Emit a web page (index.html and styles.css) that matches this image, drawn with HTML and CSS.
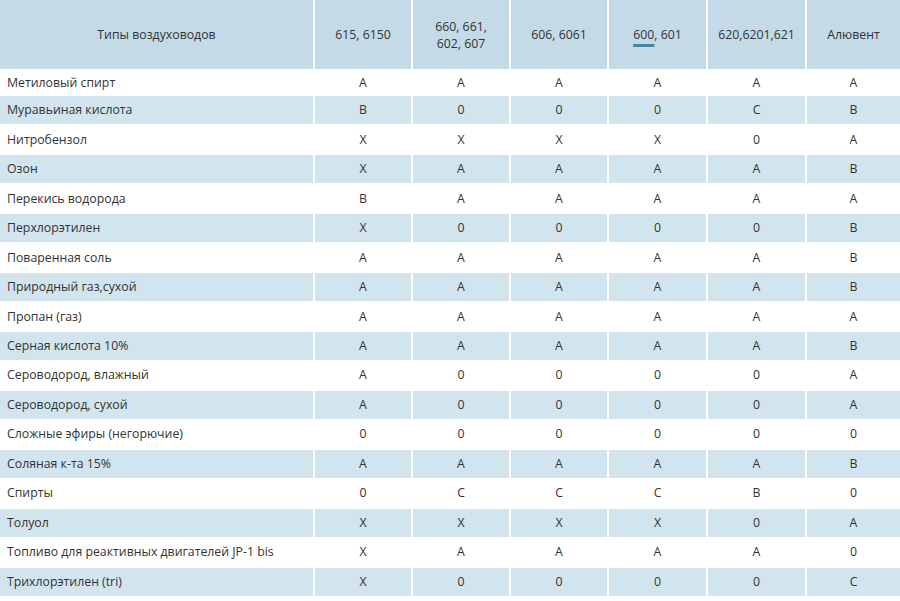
FILE: index.html
```html
<!DOCTYPE html>
<html lang="ru">
<head>
<meta charset="utf-8">
<title>Типы воздуховодов</title>
<link rel="stylesheet" href="styles.css">
</head>
<body>
<table class="chem">
<colgroup>
<col class="c-name"><col class="c-a"><col class="c-b"><col class="c-c"><col class="c-d"><col class="c-e"><col class="c-f">
</colgroup>
<thead>
<tr>
<th>Типы воздуховодов</th>
<th>615, 6150</th>
<th>660, 661,<br>602, 607</th>
<th>606, 6061</th>
<th><span class="mark">600</span>, 601</th>
<th>620,6201,621</th>
<th>Алювент</th>
</tr>
</thead>
<tbody>
<tr class="first"><td>Метиловый спирт</td><td>A</td><td>A</td><td>A</td><td>A</td><td>A</td><td>A</td></tr>
<tr><td>Муравьиная кислота</td><td>B</td><td>0</td><td>0</td><td>0</td><td>C</td><td>B</td></tr>
<tr><td>Нитробензол</td><td>X</td><td>X</td><td>X</td><td>X</td><td>0</td><td>A</td></tr>
<tr><td>Озон</td><td>X</td><td>A</td><td>A</td><td>A</td><td>A</td><td>B</td></tr>
<tr><td>Перекись водорода</td><td>B</td><td>A</td><td>A</td><td>A</td><td>A</td><td>A</td></tr>
<tr><td>Перхлорэтилен</td><td>X</td><td>0</td><td>0</td><td>0</td><td>0</td><td>B</td></tr>
<tr><td>Поваренная соль</td><td>A</td><td>A</td><td>A</td><td>A</td><td>A</td><td>B</td></tr>
<tr><td>Природный газ,сухой</td><td>A</td><td>A</td><td>A</td><td>A</td><td>A</td><td>B</td></tr>
<tr><td>Пропан (газ)</td><td>A</td><td>A</td><td>A</td><td>A</td><td>A</td><td>A</td></tr>
<tr><td>Серная кислота 10%</td><td>A</td><td>A</td><td>A</td><td>A</td><td>A</td><td>B</td></tr>
<tr><td>Сероводород, влажный</td><td>A</td><td>0</td><td>0</td><td>0</td><td>0</td><td>A</td></tr>
<tr><td>Сероводород, сухой</td><td>A</td><td>0</td><td>0</td><td>0</td><td>0</td><td>A</td></tr>
<tr><td>Сложные эфиры (негорючие)</td><td>0</td><td>0</td><td>0</td><td>0</td><td>0</td><td>0</td></tr>
<tr><td>Соляная к-та 15%</td><td>A</td><td>A</td><td>A</td><td>A</td><td>A</td><td>B</td></tr>
<tr><td>Спирты</td><td>0</td><td>C</td><td>C</td><td>C</td><td>B</td><td>0</td></tr>
<tr><td>Толуол</td><td>X</td><td>X</td><td>X</td><td>X</td><td>0</td><td>A</td></tr>
<tr><td>Топливо для реактивных двигателей JP-1 bis</td><td>X</td><td>A</td><td>A</td><td>A</td><td>A</td><td>0</td></tr>
<tr><td>Трихлорэтилен (tri)</td><td>X</td><td>0</td><td>0</td><td>0</td><td>0</td><td>C</td></tr>
</tbody>
</table>
</body>
</html>
```
FILE: styles.css
```css
html, body {
  margin: 0;
  padding: 0;
  background: #ffffff;
}
body {
  font-family: "Open Sans", "Noto Sans", "Liberation Sans", sans-serif;
  font-size: 12.3px;
  color: #333333;
}
.chem {
  width: 900px;
  table-layout: fixed;
  border-collapse: separate;
  border-spacing: 0;
}
.c-name { width: 315px; }
.c-a, .c-b, .c-c { width: 98px; }
.c-d, .c-e { width: 99px; }
.c-f { width: 93px; }

.chem th,
.chem td {
  padding: 0;
  border-right: 2px solid #ffffff;
  border-bottom: 1px solid #ffffff;
  text-align: center;
  vertical-align: middle;
  font-weight: normal;
  line-height: 16px;
}
.chem th {
  line-height: 17px;
  background: #c4dae7;
}
.chem th:last-child,
.chem td:last-child {
  border-right: 0;
}
.chem thead tr {
  height: 70px;
}
.chem tbody tr {
  height: 29.47px;
}
.chem tbody tr.first {
  height: 26px;
}
.chem tbody tr:nth-child(even) td {
  background: #d2e4ee;
}
.chem td:first-child {
  text-align: left;
  padding-left: 7px;
}
.mark {
  text-decoration: underline;
  text-decoration-color: #4b84a3;
  text-decoration-thickness: 3px;
  text-underline-offset: 5px;
}
```
